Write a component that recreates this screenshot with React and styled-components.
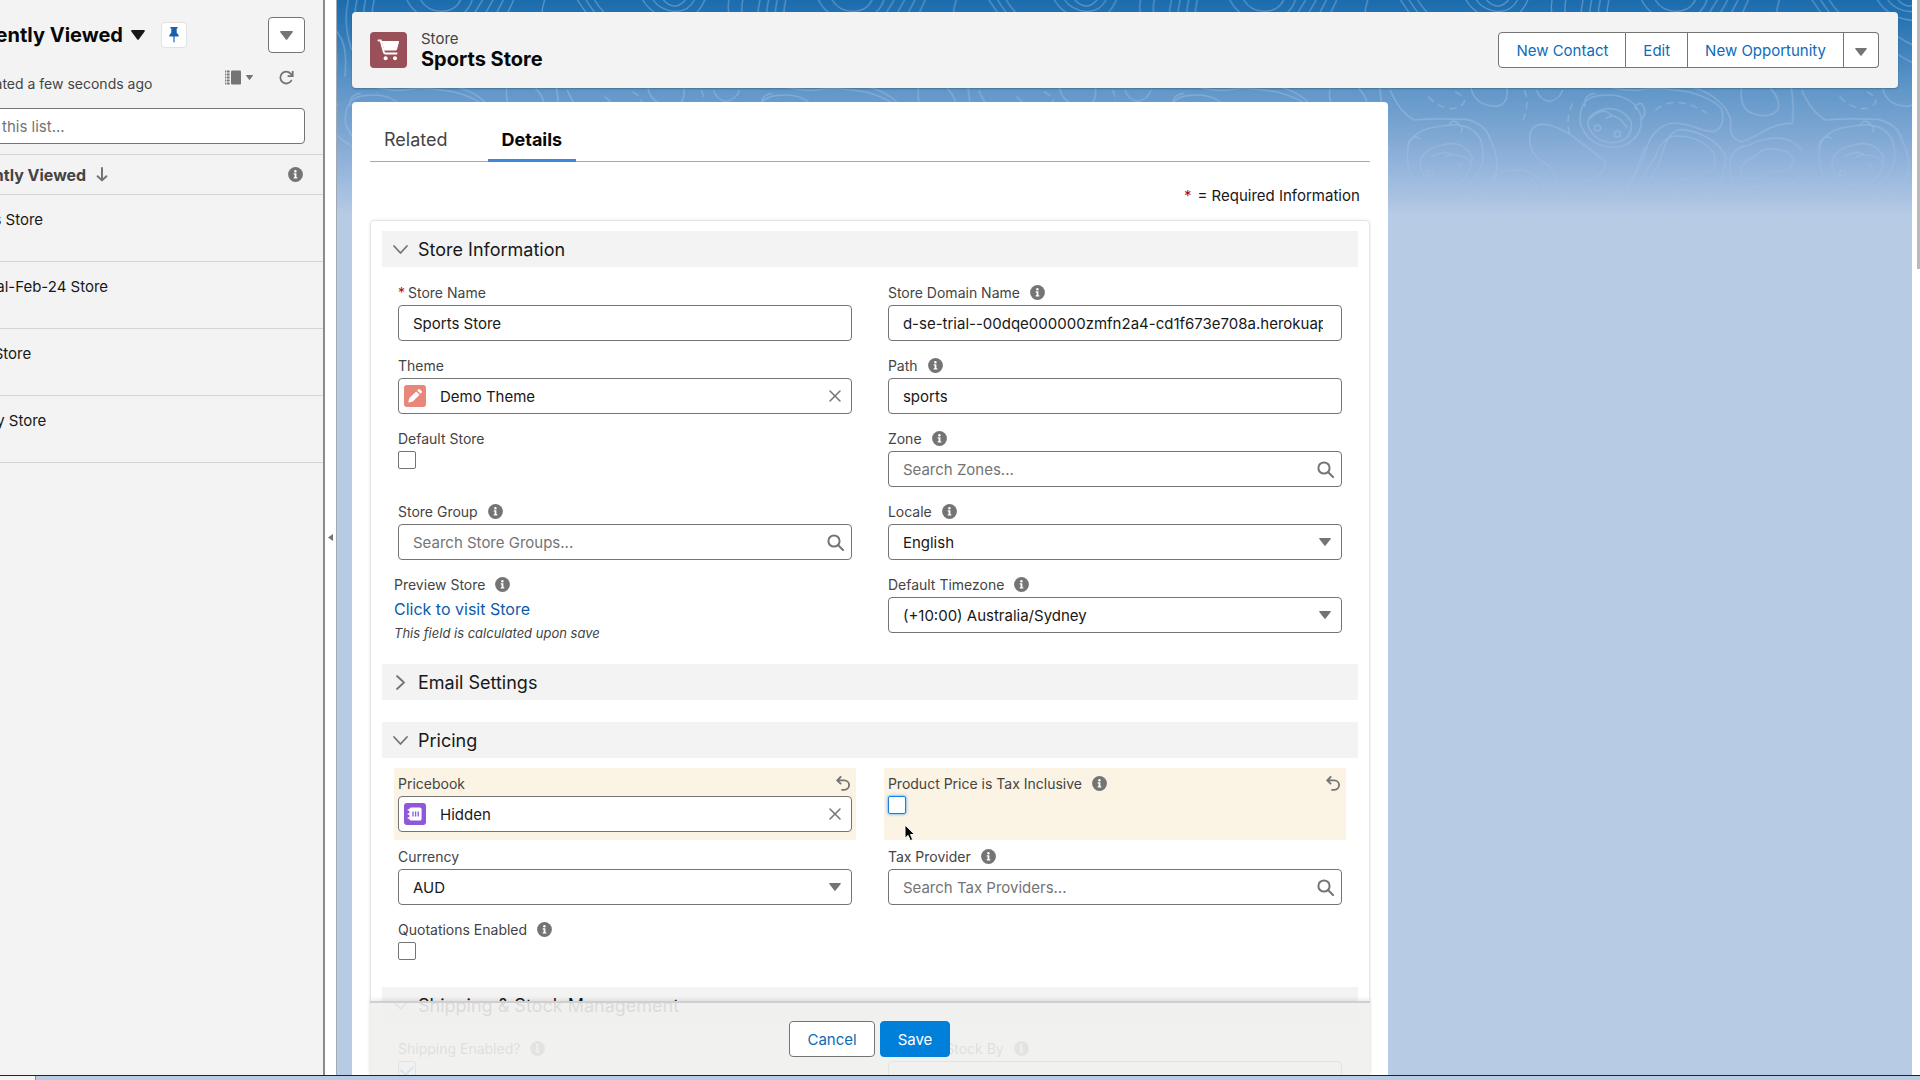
import React from 'react'
import styled, { createGlobalStyle, css } from 'styled-components'

const GlobalStyle = createGlobalStyle`
  * {
    box-sizing: border-box;
  }

  body {
    margin: 0;
    overflow: hidden;
    font-family: Inter, 'Liberation Sans', sans-serif;
    font-size: 15px;
    color: #181818;
  }

  button, input, select {
    font: inherit;
    color: inherit;
    margin: 0;
  }
`

const Page = styled.div`
  display: flex;
  flex-direction: column;
  height: 100vh;
  overflow: hidden;
  background: #fff;
`

const Workspace = styled.div`
  flex: 1;
  min-height: 0;
  display: flex;
`

/* ---------- list panel ---------- */

const ListPanel = styled.aside`
  flex: 0 0 323px;
  overflow: hidden;
  background: #f3f3f3;
`

const ListInner = styled.div`
  margin-left: -61px;
`

const ListHeader = styled.header`
  padding: 17px 18px 10px 8px;
  border-bottom: 1px solid #d4d4d4;
`

const Row = styled.div`
  display: flex;
  align-items: center;
  justify-content: ${(p) => (p.$between ? 'space-between' : 'flex-start')};
  gap: ${(p) => p.$gap || 0}px;
`

const ListTitle = styled.h1`
  margin: 0;
  padding-left: 12px;
  font-size: 20px;
  line-height: 36px;
  font-weight: 700;
  color: #080808;
`

const PlainButton = styled.button`
  display: inline-flex;
  align-items: center;
  justify-content: center;
  padding: 0;
  border: 0;
  background: none;
  color: #747474;
`

const PinButton = styled(PlainButton)`
  width: 26px;
  height: 26px;
  margin-left: 8px;
  border: 1px solid #e2e2e2;
  border-radius: 4px;
  background: #fff;
  color: #1b5faa;
`

const MenuButton = styled(PlainButton)`
  width: 37px;
  height: 36px;
  border: 1px solid #747474;
  border-radius: 4px;
  background: #fff;
`

const ListStatus = styled.div`
  display: flex;
  justify-content: space-between;
  align-items: center;
  padding: 12px 11px 6px 20px;
  font-size: 14px;
  line-height: 37px;
  color: #444;
`

const ListTools = styled.div`
  display: flex;
  align-items: center;
  gap: 26px;
  padding-bottom: 12px;
`

const ListSearch = styled.input`
  display: block;
  width: 100%;
  height: 36px;
  padding: 0;
  border: 1px solid #747474;
  border-radius: 4px;
  background: #fff;

  &::placeholder {
    color: #747474;
    opacity: 1;
  }
`

const ColumnHead = styled.div`
  display: flex;
  align-items: center;
  gap: 10px;
  height: 40px;
  padding: 0 20px 0 16px;
  border-bottom: 1px solid #d4d4d4;
  font-size: 16px;
  font-weight: 700;
  color: #444;

  > :last-child {
    margin-left: auto;
  }
`

const StoreList = styled.ul`
  list-style: none;
  margin: 0;
  padding: 0;
`

const StoreItem = styled.li`
  height: 67px;
  padding: 14px 16px;
  line-height: 22px;
  border-bottom: 1px solid #d4d4d4;
`

const Splitter = styled.div`
  flex: 0 0 14px;
  display: flex;
  align-items: center;
  justify-content: center;
  border-left: 2px solid #8a8a8a;
  border-right: 1px solid #a3a9b3;
  background: #fff;
`

/* ---------- record page ---------- */

const Record = styled.main`
  position: relative;
  flex: 1;
  min-width: 0;
  display: flex;
  flex-direction: column;
  gap: 14px;
  padding: 12px 14px 0 15px;
  background: linear-gradient(#1b6cad 0, #2f79b6 30px, #6197c9 90px, #82a9d4 140px, #9dbadf 180px, #b7cbe4 216px);
`

const Contours = styled.svg`
  position: absolute;
  top: 0;
  left: 0;
  width: 100%;
  height: 222px;
  -webkit-mask-image: linear-gradient(#000 60%, transparent);
  mask-image: linear-gradient(#000 60%, transparent);
`

const RecordHeader = styled.header`
  position: relative;
  flex: none;
  display: flex;
  align-items: center;
  justify-content: space-between;
  height: 76px;
  padding: 0 19px 0 18px;
  border-radius: 4px;
  background: #f3f3f3;
  box-shadow: 0 1px 2px rgba(0, 0, 0, 0.25);
`

const RecordType = styled.p`
  margin: 0;
  font-size: 15px;
  line-height: 18px;
  color: #444;
`

const RecordName = styled.h2`
  margin: 0;
  font-size: 20px;
  line-height: 22px;
  font-weight: 700;
  color: #080808;
`

const ButtonGroup = styled.div`
  display: flex;
`

const GroupButton = styled.button`
  height: 36px;
  padding: 0 ${(p) => (p.$icon ? 11 : 17)}px;
  border: 1px solid #747474;
  border-left-width: 0;
  background: #fff;
  color: #0b6cb8;

  &:first-child {
    border-left-width: 1px;
    border-radius: 4px 0 0 4px;
  }

  &:last-child {
    border-radius: 0 4px 4px 0;
  }
`

const DetailCard = styled.section`
  position: relative;
  flex: 1;
  min-height: 0;
  width: 67%;
  padding: 0 18px;
  overflow: hidden;
  border-radius: 4px 4px 0 0;
  background: #fff;
`

const Tabs = styled.nav`
  display: flex;
  gap: 26px;
  height: 60px;
  border-bottom: 1px solid #a9a9a9;
`

const Tab = styled.a`
  height: 60px;
  padding: 15px 14px 0;
  border-bottom: 3px solid ${(p) => (p.$active ? '#3f86dd' : 'transparent')};
  font-size: 18px;
  line-height: 46px;
  font-weight: ${(p) => (p.$active ? 700 : 400)};
  color: ${(p) => (p.$active ? '#080808' : '#444')};
  text-decoration: none;
`

const RequiredNote = styled.p`
  margin: 0;
  padding: 22px 10px 12px;
  line-height: 24px;
  text-align: right;
`

const Asterisk = styled.span`
  margin-right: ${(p) => p.$gap}px;
  color: #ba0517;
`

const FormCard = styled.form`
  padding: 10px 11px;
  border: 1px solid #e5e5e5;
  border-radius: 4px;
  box-shadow: 0 0 3px rgba(0, 0, 0, 0.1);
`

const Section = styled.section`
  margin-bottom: ${(p) => (p.$open ? 19 : 22)}px;
`

const SectionTitle = styled.h3`
  margin: 0;
  background: #f3f3f3;
  font-size: 18px;
  font-weight: 400;
`

const SectionToggle = styled.button`
  display: flex;
  align-items: center;
  gap: 9px;
  width: 100%;
  height: 36px;
  padding: 0 10px;
  border: 0;
  background: none;
  text-align: left;
`

const Fields = styled.div`
  display: grid;
  grid-template-columns: 1fr 1fr;
  gap: 1px 28px;
  padding: 10px 12px 0;
`

const FieldCell = styled.div`
  position: relative;
  padding: ${(p) => (p.$flush ? '4px 4px 0 0' : '4px 4px 8px')};
  background: ${(p) => (p.$edited ? '#fbf3e3' : 'none')};
`

const LabelRow = styled.div`
  display: flex;
  align-items: center;
  gap: 10px;
  height: 24px;
  padding: 0 2px 2px 0;
  font-size: 14px;
  color: #444;

  > button {
    margin-left: auto;
  }
`

const Control = styled.div`
  position: relative;
  display: flex;
  align-items: center;
`

const fieldBox = css`
  width: 100%;
  height: 36px;
  border: 1px solid #747474;
  border-radius: 4px;
  background: #fff;
  padding: 0 18px 0 ${(p) => (p.$icon ? 41 : 14)}px;
`

const TextInput = styled.input`
  ${fieldBox}

  &::placeholder {
    color: #747474;
    opacity: 1;
  }
`

const Select = styled.select`
  ${fieldBox}
  appearance: none;
`

const ControlStart = styled.span`
  position: absolute;
  left: 6px;
  display: flex;
`

const ControlEnd = styled.span`
  position: absolute;
  right: ${(p) => p.$right}px;
  display: flex;
  color: #747474;
  pointer-events: none;
`

const CheckBox = styled.input`
  appearance: none;
  display: block;
  width: 18px;
  height: 18px;
  border: 1px solid ${(p) => (p.$focus ? '#1b7fe0' : '#747474')};
  border-radius: 2px;
  background: #fff;
  box-shadow: ${(p) => (p.$focus ? '0 0 3px #1b96ff' : 'none')};

  &:checked::after {
    content: '';
    display: block;
    width: 6px;
    height: 10px;
    margin: 1px auto;
    border: solid #0176d3;
    border-width: 0 2px 2px 0;
    transform: rotate(45deg);
  }
`

const VisitLink = styled.a`
  display: block;
  font-size: 16px;
  line-height: 24px;
  color: #0b5cab;
  text-decoration: none;
`

const Hint = styled.p`
  margin: 0;
  font-size: 13px;
  line-height: 24px;
  font-style: italic;
  color: #444;
`

const Pointer = styled.svg`
  position: absolute;
  left: 20px;
  top: 56px;
  z-index: 1;
`

const ActionBar = styled.footer`
  position: absolute;
  left: 18px;
  right: 18px;
  bottom: 0;
  display: flex;
  align-items: center;
  justify-content: center;
  gap: 5px;
  height: 74px;
  border-top: 2px solid #d0cfce;
  background: rgba(240, 239, 238, 0.9);
  box-shadow: 0 -2px 4px rgba(0, 0, 0, 0.08);
`

const ActionButton = styled.button`
  height: 36px;
  padding: 0 17px;
  border: 1px solid ${(p) => (p.$primary ? '#0180db' : '#747474')};
  border-radius: 4px;
  background: ${(p) => (p.$primary ? '#0180db' : '#fff')};
  color: ${(p) => (p.$primary ? '#fff' : '#0b6cb8')};
`

const ScrollTrack = styled.div`
  flex: 0 0 8px;
  display: flex;
  justify-content: flex-end;
  background: #fff;
`

const ScrollThumb = styled.div`
  width: 3px;
  height: 25%;
  background: #b9b9b9;
`

const BottomStrip = styled.div`
  flex: 0 0 5px;
  display: flex;
  border-top: 1px solid #222;
  background: #b7cbe4;
`

const StripPanel = styled.div`
  display: flex;
  width: 50px;
  padding-right: 14px;
  background: linear-gradient(#f3f3f3, #f3f3f3) content-box #fff;

  &::after {
    content: '';
    margin-left: auto;
    border-right: 1px solid #8a8a8a;
  }
`

/* ---------- icons ---------- */

const Caret = ({ size = 12 }) => (
  <svg width={size} height={Math.round(size * 0.7)} viewBox="0 0 12 8" fill="currentColor" preserveAspectRatio="none">
    <path d="M0.8 0h10.4c.6 0 .9.6.5 1.1L6.6 7.6a.8.8 0 0 1-1.2 0L.3 1.1C-.1.6.2 0 .8 0z" />
  </svg>
)

const InfoIcon = () => (
  <svg width="15" height="15" viewBox="0 0 15 15">
    <circle cx="7.5" cy="7.5" r="7.4" fill="#747474" />
    <circle cx="7.4" cy="4.2" r="1.2" fill="#fff" />
    <path d="M5.7 6.3h2.7v3.9h.9v1.2H5.7v-1.2h.9V7.4h-.9z" fill="#fff" />
  </svg>
)

const SearchIcon = () => (
  <svg width="17" height="17" viewBox="0 0 17 17" fill="none" stroke="currentColor" strokeWidth="2">
    <circle cx="7" cy="7" r="5.6" />
    <path d="M11 11l5 5" strokeLinecap="round" />
  </svg>
)

const ClearIcon = () => (
  <svg width="12" height="12" viewBox="0 0 12 12" fill="none" stroke="currentColor" strokeWidth="1.5" strokeLinecap="round">
    <path d="M1 1l10 10M11 1L1 11" />
  </svg>
)

const UndoIcon = () => (
  <svg width="14" height="15" viewBox="0 0 14 15" fill="none" stroke="currentColor" strokeWidth="1.8" strokeLinecap="round" strokeLinejoin="round">
    <path d="M4.6 1L1.2 4.4l3.4 3.2M1.4 4.4h7a4.6 4.6 0 0 1 0 9.4H6" />
  </svg>
)

const Chevron = ({ open }) => (
  <svg width="17" height="17" viewBox="0 0 17 17" fill="none" stroke="#747474" strokeWidth="1.8" strokeLinecap="round" strokeLinejoin="round">
    <path d={open ? 'M2 5l6.5 7L15 5' : 'M5 2l7 6.5L5 15'} />
  </svg>
)

const PinIcon = () => (
  <svg width="10" height="16" viewBox="0 0 10 16" fill="currentColor">
    <path d="M1.4 0h7.2v1.4H7.7v4.4L9.6 8v1.4H5.6v5.2L5 16l-.6-1.4V9.4H.4V8l1.9-2.2V1.4h-.9z" />
  </svg>
)

const DisplayIcon = () => (
  <svg width="16" height="15" viewBox="0 0 16 15" fill="currentColor">
    <rect x="6" y="0.5" width="10" height="14" rx="1" />
    <path d="M0 0.5h4.6v2H0zM0 3.5h4.6v2H0zM0 6.5h4.6v2H0zM0 9.5h4.6v2H0zM0 12.5h4.6v2H0z" />
    <path d="M1.4 0v15" stroke="#f3f3f3" strokeWidth="0.8" />
  </svg>
)

const RefreshIcon = () => (
  <svg width="15" height="15" viewBox="0 0 15 15" fill="none" stroke="currentColor" strokeWidth="1.8">
    <path d="M12.3 10.6A5.9 5.9 0 1 1 11.6 3.6L13 5" strokeLinecap="round" />
    <path d="M13.7 1v5.2H8.6" />
  </svg>
)

const SortIcon = () => (
  <svg width="12" height="15" viewBox="0 0 12 15" fill="none" stroke="#747474" strokeWidth="2" strokeLinecap="round" strokeLinejoin="round">
    <path d="M6 1v12M1.6 9.2L6 13.4l4.4-4.2" />
  </svg>
)

const CartIcon = () => (
  <svg width="37" height="36" viewBox="0 0 37 36">
    <rect width="37" height="36" rx="4" fill="#9a5058" />
    <path d="M8.5 8.6h2.2l3.2 11.6c.3 1 .7 1.4 1.6 1.4h11" fill="none" stroke="#fff" strokeWidth="2" strokeLinecap="round" />
    <path d="M11.8 9h16.4c.6 0 .9.4.8.9l-2 7.6c-.2.6-.6 1-1.2 1H15c-.5 0-.9-.3-1-.8L11.8 9z" fill="#fff" />
    <circle cx="15.6" cy="26.2" r="2" fill="#fff" />
    <circle cx="25" cy="26.2" r="2" fill="#fff" />
  </svg>
)

const ThemeIcon = () => (
  <svg width="22" height="22" viewBox="0 0 22 22">
    <rect width="22" height="22" rx="3" fill="#e9867a" />
    <g fill="#fff">
      <path d="M12.2 6.4l3.4 3.4-6.8 6.8-4.1 1c-.3.1-.5-.2-.4-.4l1-4.1z" />
      <path d="M13.2 5.4l1-1c.5-.5 1.2-.5 1.7 0l1.7 1.7c.5.5.5 1.2 0 1.7l-1 1z" />
    </g>
  </svg>
)

const PricebookIcon = () => (
  <svg width="22" height="22" viewBox="0 0 22 22">
    <rect width="22" height="22" rx="3" fill="#9058d8" />
    <rect x="5.4" y="4.6" width="12.2" height="13" rx="1.6" fill="#fff" />
    <path d="M4.2 7h2.6M4.2 11h2.6M4.2 15h2.6" stroke="#fff" strokeWidth="1.4" strokeLinecap="round" />
    <path d="M9 8.6v5M11.6 8.6v5M14.2 8.6v5" stroke="#9058d8" strokeWidth="1.3" />
  </svg>
)

const TopoPattern = () => (
  <Contours aria-hidden="true">
    <defs>
      <pattern id="topo" width="1195" height="680" patternUnits="userSpaceOnUse" patternTransform="translate(230 0) scale(0.3444 0.3333)">
        <g transform="translate(-30 0)" fill="none" stroke="#b4cdec" strokeOpacity="0.4" strokeWidth="4" strokeLinejoin="round">
          {/* ridges along the top edge */}
          <path d="M60 0q20 30 60 90M85 0q20 34 60 80M110 0q20 34 60 70M250 0q30 50 90 60t90-60M280 0q20 30 60 34t60-34M310 0q14 16 30 18t34-18M500 0q-10 60 30 110t20 120M540 0q-10 60 20 100t20 130M590 0q-16 70 10 150M615 0q-16 70 10 150M640 0q-16 70 10 150M665 0q-16 70 10 150M760 0q30 60 100 60t90-60M800 0q20 34 60 34t56-34M980 0l-60 100M1010 0l-70 130M1040 0l-80 160M1070 0l-80 180M1160 0q-20 60 10 120" />
          <path d="M160 110q70-60 150 0t160 20M140 160q90-50 180 10t150 0M760 130q60-40 130 20t190-20M740 180q80-50 160 20t160-20" />
          {/* hills */}
          <path d="M30 270q30 70 70 90q60-6 150-2q60 14 70 60q30 60 16 110q-14 50-90 70q-90 8-120 0t-96-8" />
          <path d="M265 265q10 50 70 54q40-4 34-54M455 270q10 30 36 34q30-4 40-34" />
          <path d="M436 400q10-36 60-24q50 16 80 46q70 50 80 70q-4 30-60 54q-50 20-60 40q-16-6-30-66q-16-30-40-38q-36-30-30-82z" />
          <path d="M668 262q60 14 100 6t130 8q70 20 94 50q14 50-20 68q-30 0-60-14q-70-24-100 6q-30 20-40 70q-20 60-60 110l-60 110" />
          <path d="M910 262q90 30 110 100q-10 50 30 64q40-16 60-30q40-26 88-26q6-50-4-110" />
          <path d="M1050 265q-6 60 30 74q50 20 76-10q10-30-22-64" />
          <path d="M700 640q60-100 100-170q20-60 60-62q70 0 110 50q10 60-20 60q-80 20-110 40q-20 40-14 90M725 640q60-90 90-160q20-90 60-92q90 10 130 80q-6 60-20 80q-80 10-120 20q-20 30-20 72M680 640q60-110 90-200" />
          <path d="M1050 520q-10-30 40-50q20-30 60-22q50 4 50 40q-10 30-50 26q-30 2-46 16q-40 16-54-10zM1015 500q6-60 50-62q80-40 130-14q50 30 40 80q-10 50-70 50q-60-10-80 20q-50 6-60-10z" />
          <path d="M890 630q20-50 60-50t60 50M915 630q10-28 35-28t36 28M1010 570v60M1040 630q20-40 50-36t40 36M1085 560q100 4 130 30t26 40" />
          <path d="M570 620q10-50 60-52q50-4 54 40q-10 20-20 32M240 600q60-60 130-90q80-10 104 50q0 40-50 68M270 620q30-50 80-20q10 20 4 30M300 630q20-30 40 0" />
          <circle cx="430" cy="560" r="24" />
          <circle cx="430" cy="560" r="9" />
          <path d="M140 290q50 50 90 30t-20-50M420 270q16 40-4 90M560 310q-20 40-10 90M800 330q60-50 150 10" strokeDasharray="22 14" />
          {/* bear heads */}
          <path d="M82 440q14-54 100-62q80-16 110 40q24 70-20 120q-70 60-150 20q-50-30-40-118zM118 500q-4-50 60-64q60-20 90 34q0 60-50 84q-80 16-100-54zM150 470q40-20 60-8l-24 10q40-20 80 14M84 450q-10-30 20-40l14 6M200 378q10-26 30-6q16 14 4 24" />
          <circle cx="148" cy="520" r="9" />
          <path d="M222 490q14 0 12 20" />
          <path d="M582 370q-6-80 60-84q90-10 116 60q10 70-60 94q-90 10-116-70zM606 380q-10-40 50-54q50-4 74 40q4 50-40 60q-60 10-84-46zM610 356q40-40 64-8l-16 6q30-20 60 30M596 320q-6-36 30-40M744 330q-6-20 16-20q20 30-2 50" />
          <circle cx="632" cy="384" r="9" />
          <circle cx="690" cy="402" r="9" />
        </g>
      </pattern>
    </defs>
    <rect width="100%" height="100%" fill="url(#topo)" />
  </Contours>
)

/* ---------- fields ---------- */

const Field = ({ id, label, info, required, type = 'text', value, placeholder, icon, edited, focus, checked, children }) => (
  <FieldCell $edited={edited}>
    <LabelRow>
      <label htmlFor={id}>
        {required && <Asterisk $gap={3}>*</Asterisk>}
        {label}
      </label>
      {info && <InfoIcon />}
      {edited && <PlainButton type="button" aria-label={`Undo ${label}`}><UndoIcon /></PlainButton>}
    </LabelRow>
    {type === 'checkbox' && <CheckBox id={id} type="checkbox" defaultChecked={checked} $focus={focus} />}
    {type === 'select' && (
      <Control>
        <Select id={id} defaultValue={value}>
          <option>{value}</option>
        </Select>
        <ControlEnd $right={11}><Caret /></ControlEnd>
      </Control>
    )}
    {type === 'text' && (
      <Control>
        {icon && <ControlStart>{icon}</ControlStart>}
        <TextInput id={id} type="text" defaultValue={value} placeholder={placeholder} $icon={icon} />
        {icon && <ControlEnd $right={11}><ClearIcon /></ControlEnd>}
        {placeholder && <ControlEnd $right={8}><SearchIcon /></ControlEnd>}
      </Control>
    )}
    {children}
  </FieldCell>
)

const FormSection = ({ title, open, children }) => (
  <Section $open={open}>
    <SectionTitle>
      <SectionToggle type="button" aria-expanded={!!open}>
        <Chevron open={open} />
        {title}
      </SectionToggle>
    </SectionTitle>
    {open && <Fields>{children}</Fields>}
  </Section>
)

const stores = ['Sports Store', 'SE Trial-Feb-24 Store', 'Main Store', 'Beauty Store']

const App = () => {
  return (
    <Page>
      <GlobalStyle />
      <Workspace>
        <ListPanel>
          <ListInner>
            <ListHeader>
              <Row $between>
                <Row $gap={8}>
                  <ListTitle>Recently Viewed</ListTitle>
                  <Caret size={14} />
                  <PinButton aria-label="Pin list"><PinIcon /></PinButton>
                </Row>
                <MenuButton aria-label="List actions"><Caret size={13} /></MenuButton>
              </Row>
              <ListStatus>
                Updated a few seconds ago
                <ListTools>
                  <PlainButton aria-label="Display as">
                    <Row $gap={5}><DisplayIcon /><Caret size={7} /></Row>
                  </PlainButton>
                  <PlainButton aria-label="Refresh"><RefreshIcon /></PlainButton>
                </ListTools>
              </ListStatus>
              <ListSearch type="search" aria-label="Search this list" placeholder="Search this list..." />
            </ListHeader>
            <ColumnHead>
              <span>Recently Viewed</span>
              <SortIcon />
              <InfoIcon />
            </ColumnHead>
            <StoreList>
              {stores.map((name) => <StoreItem key={name}>{name}</StoreItem>)}
            </StoreList>
          </ListInner>
        </ListPanel>
        <Splitter>
          <PlainButton aria-label="Collapse list">
            <svg width="6" height="7" viewBox="0 0 6 7" fill="currentColor"><path d="M0 3.5L5 0v7z" /></svg>
          </PlainButton>
        </Splitter>

        <Record>
          <TopoPattern />
          <RecordHeader>
            <Row $gap={14}>
              <CartIcon />
              <div>
                <RecordType>Store</RecordType>
                <RecordName>Sports Store</RecordName>
              </div>
            </Row>
            <ButtonGroup>
              <GroupButton>New Contact</GroupButton>
              <GroupButton>Edit</GroupButton>
              <GroupButton>New Opportunity</GroupButton>
              <GroupButton $icon aria-label="More actions"><PlainButton as="span"><Caret /></PlainButton></GroupButton>
            </ButtonGroup>
          </RecordHeader>

          <DetailCard>
            <Tabs>
              <Tab href="#related">Related</Tab>
              <Tab href="#details" $active>Details</Tab>
            </Tabs>
            <RequiredNote><Asterisk $gap={6}>*</Asterisk>= Required Information</RequiredNote>
            <FormCard>
              <FormSection title="Store Information" open>
                <Field id="name" label="Store Name" required value="Sports Store" />
                <Field id="domain" label="Store Domain Name" info value="d-se-trial--00dqe000000zmfn2a4-cd1f673e708a.herokuapp.com" />
                <Field id="theme" label="Theme" value="Demo Theme" icon={<ThemeIcon />} />
                <Field id="path" label="Path" info value="sports" />
                <Field id="default" label="Default Store" type="checkbox" />
                <Field id="zone" label="Zone" info placeholder="Search Zones..." />
                <Field id="group" label="Store Group" info placeholder="Search Store Groups..." />
                <Field id="locale" label="Locale" info type="select" value="English" />
                <FieldCell $flush>
                  <LabelRow>Preview Store <InfoIcon /></LabelRow>
                  <VisitLink href="#store">Click to visit Store</VisitLink>
                  <Hint>This field is calculated upon save</Hint>
                </FieldCell>
                <Field id="timezone" label="Default Timezone" info type="select" value="(+10:00) Australia/Sydney" />
              </FormSection>
              <FormSection title="Email Settings" />
              <FormSection title="Pricing" open>
                <Field id="pricebook" label="Pricebook" value="Hidden" icon={<PricebookIcon />} edited />
                <Field id="taxinc" label="Product Price is Tax Inclusive" info type="checkbox" edited focus>
                  <Pointer width="12" height="18" viewBox="0 0 12 18">
                    <path d="M1 1v13.2l3.1-2.8 2.2 5.2 2.4-1-2.2-5.1h4.2z" fill="#000" stroke="#fff" />
                  </Pointer>
                </Field>
                <Field id="currency" label="Currency" type="select" value="AUD" />
                <Field id="taxprovider" label="Tax Provider" info placeholder="Search Tax Providers..." />
                <Field id="quotes" label="Quotations Enabled" info type="checkbox" />
              </FormSection>
              <FormSection title="Shipping & Stock Management" open>
                <Field id="shipping" label="Shipping Enabled?" info type="checkbox" checked />
                <Field id="stock" label="Manage Stock By" info type="select" value="" />
              </FormSection>
            </FormCard>
            <ActionBar>
              <ActionButton>Cancel</ActionButton>
              <ActionButton $primary>Save</ActionButton>
            </ActionBar>
          </DetailCard>
        </Record>
        <ScrollTrack>
          <ScrollThumb />
        </ScrollTrack>
      </Workspace>
      <BottomStrip>
        <StripPanel />
      </BottomStrip>
    </Page>
  )
}

export default App
